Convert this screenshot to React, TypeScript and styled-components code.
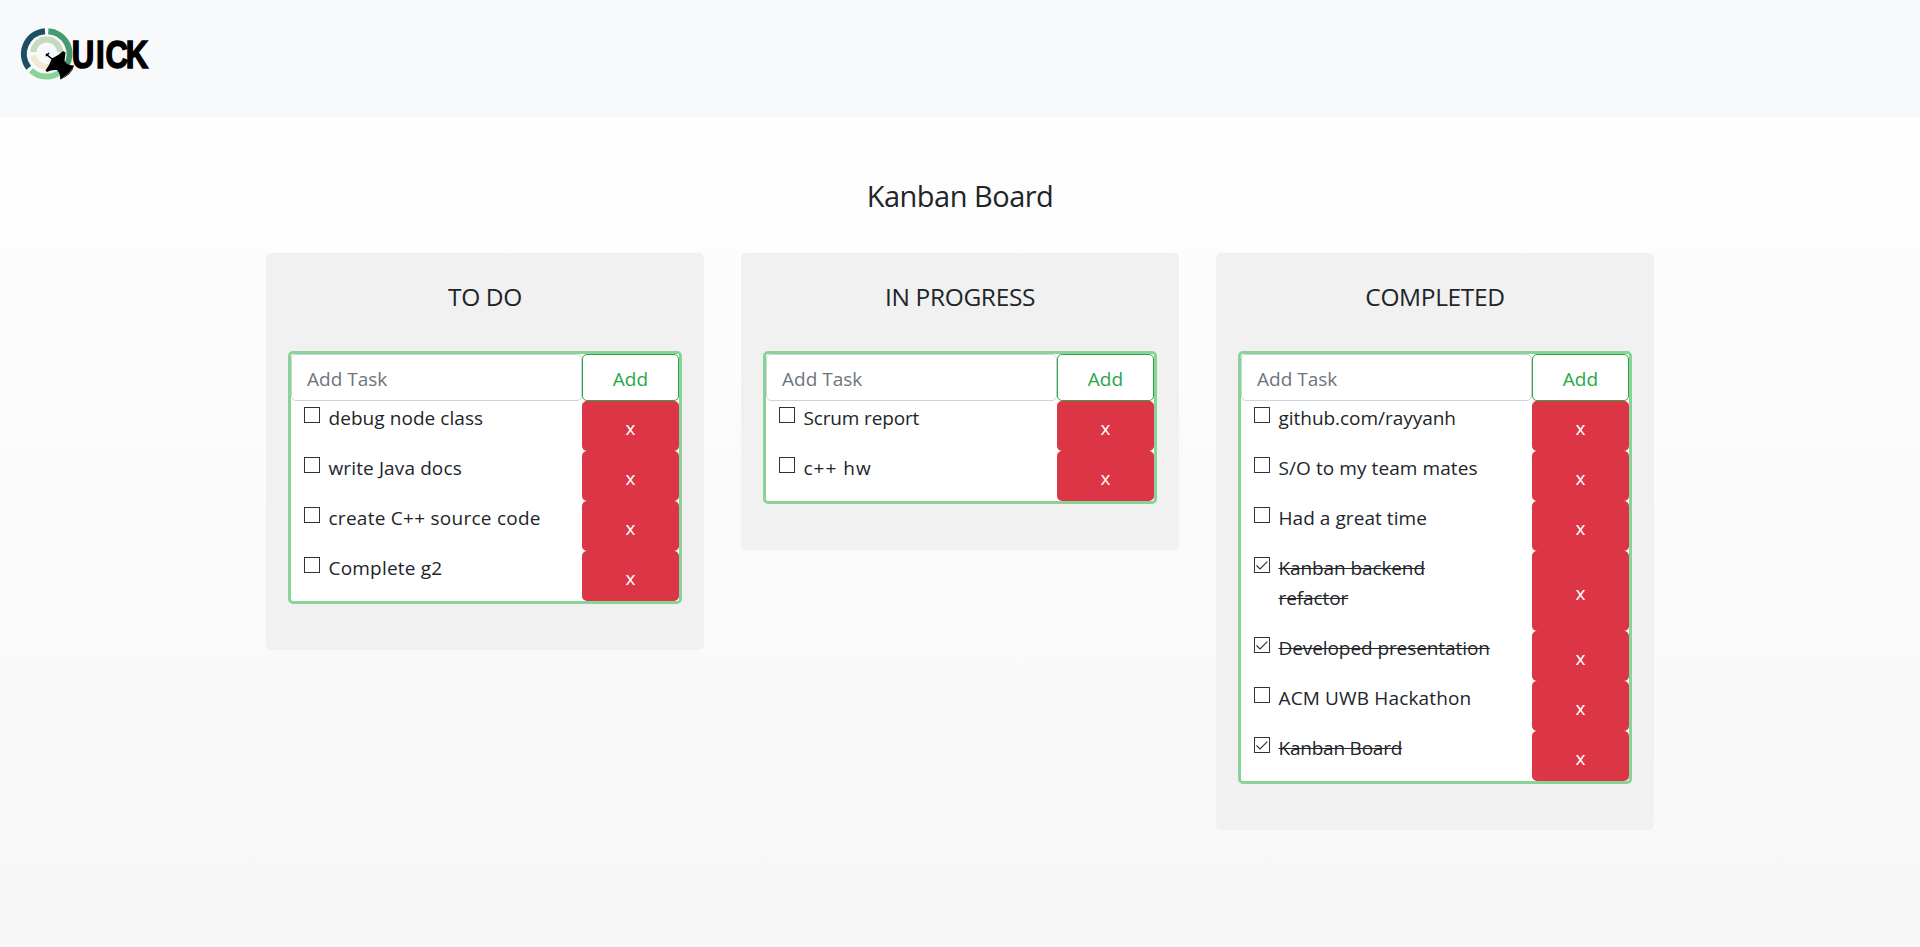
import React, { useState } from "react";
import styled, { createGlobalStyle } from "styled-components";

const GlobalStyle = createGlobalStyle`
  *, *::before, *::after { box-sizing: border-box; }
  body {
    margin: 0;
    min-height: 947px;
    font-family: "Open Sans", "Noto Sans", sans-serif;
    font-size: 19px;
    line-height: 30px;
    color: #212529;
    background: linear-gradient(#ffffff, #f7f7f7) no-repeat;
  }
`;

const Header = styled.header`
  height: 117px;
  padding: 20px 15px;
  background: #f8f9fb;
`;

const Logo = styled.svg`
  display: block;
  width: 140px;
  height: 65px;
  overflow: visible;
`;

const Main = styled.main`
  display: flex;
  flex-direction: column;
  align-items: center;
  padding-top: 60px;
`;

const PageTitle = styled.h1`
  margin: 0 0 38px;
  font-size: 29px;
  font-weight: 400;
  line-height: 38px;
  letter-spacing: -0.5px;
`;

const Board = styled.div`
  display: flex;
  align-items: flex-start;
  gap: 37px;
`;

const Column = styled.section`
  width: 438px;
  padding: 28px 22px 46px;
  border-radius: 5px;
  background: #f1f1f1;
`;

const ColumnTitle = styled.h2`
  margin: 0 0 38px;
  font-size: 24.5px;
  font-weight: 400;
  line-height: 32px;
  letter-spacing: -0.35px;
  text-align: center;
`;

const TaskBox = styled.div`
  border: 3px solid #88d498;
  border-radius: 5px;
  background: #fff;
`;

const AddRow = styled.form`
  display: flex;
  height: 47px;
`;

const TaskInput = styled.input`
  flex: 1;
  min-width: 0;
  padding: 2px 15px 0;
  border: 1px solid #ced4da;
  border-radius: 5px;
  background: #fff;
  color: #495057;
  font: inherit;
  outline: none;
  &::placeholder { color: #6c757d; opacity: 1; }
`;

const AddButton = styled.button`
  width: 97px;
  padding: 2px 0 0;
  border: 1px solid #28a745;
  border-radius: 5px;
  background: #fff;
  color: #28a745;
  font: inherit;
`;

const TaskRow = styled.div`
  display: flex;
  min-height: 50px;
`;

const TaskLabel = styled.label`
  display: flex;
  flex: 1;
  align-items: flex-start;
  gap: 8.5px;
  padding: 2px 30px 18px 13px;
`;

const CheckBox = styled.svg`
  flex: none;
  width: 16px;
  height: 16px;
  margin-top: 4px;
`;

const TaskText = styled.span<{ $done: boolean; $tracking: number }>`
  max-width: 216px;
  letter-spacing: ${(p) => p.$tracking}px;
  text-decoration: ${(p) => (p.$done ? "line-through" : "none")};
  text-decoration-thickness: 1px;
`;

const DeleteButton = styled.button`
  width: 97px;
  padding: 3px 0 0;
  border: 0;
  border-radius: 5px;
  background: #dc3545;
  color: #fff;
  font: inherit;
`;

type Task = { text: string; done?: boolean; tracking?: number };

const columns: { title: string; tasks: Task[] }[] = [
  {
    title: "TO DO",
    tasks: [
      { text: "debug node class", tracking: 0.06 },
      { text: "write Java docs", tracking: 0.12 },
      { text: "create C++ source code", tracking: 0.26 },
      { text: "Complete g2", tracking: 0.2 },
    ],
  },
  {
    title: "IN PROGRESS",
    tasks: [{ text: "Scrum report", tracking: -0.15 }, { text: "c++ hw", tracking: 1 }],
  },
  {
    title: "COMPLETED",
    tasks: [
      { text: "github.com/rayyanh", tracking: -0.04 },
      { text: "S/O to my team mates", tracking: 0.08 },
      { text: "Had a great time", tracking: 0.06 },
      { text: "Kanban backend refactor", done: true, tracking: -0.1 },
      { text: "Developed presentation", done: true, tracking: -0.08 },
      { text: "ACM UWB Hackathon", tracking: 0.15 },
      { text: "Kanban Board", done: true, tracking: -0.22 },
    ],
  },
];

function QuickLogo() {
  return (
    <Logo viewBox="15 20 140 65" aria-label="Quick">
      <g fill="none" strokeWidth="6">
        <path d="M45 31.2A22.7 22.7 0 0 0 28.7 67.8" stroke="#1d4e64" />
        <path d="M48.3 31.2A22.7 22.7 0 0 1 66 66" stroke="#469a72" />
        <path d="M31 70.3A22.7 22.7 0 0 0 61 71.5" stroke="#88d498" />
        <path d="M33.2 52A13.6 13.6 0 0 1 60.3 52" stroke="#c6dabf" />
        <path d="M33.2 55.3A13.6 13.6 0 0 0 50 66.5" stroke="#f3e9d2" />
      </g>
      <path d="M46 54L55 61.5M46 56L49 53" stroke="#000" strokeWidth="1.6" />
      <path d="M52 58.5Q59 55 63 51L65.5 52.5L64.5 61Q67 65.5 74 65.5Q72 75 60 79.5Q61 74 57 70Q51 69.5 47 72L45.5 70.5Q49 66 52 58.5Z" fill="#000" />
      <path d="M72.5 68.5Q69 75 62.5 78" fill="none" stroke="#666" />
      <text
        transform="translate(72 67.7) scale(0.8 1)"
        x="-0.2 30 42 67.3"
        y="0"
        fontFamily="Liberation Sans, sans-serif"
        fontWeight="700"
        fontSize="39"
        stroke="#000"
        strokeWidth="1.5"
      >
        UICK
      </text>
    </Logo>
  );
}

function TaskItem({ task }: { task: Task }) {
  const [done, setDone] = useState(!!task.done);
  return (
    <TaskRow>
      <TaskLabel onClick={() => setDone(!done)}>
        <CheckBox viewBox="0 0 16 16" fill="none">
          <rect x="0.5" y="0.5" width="15" height="15" fill="#fff" stroke="#333" />
          {done && <path d="M2.5 8.5L6 12L13.3 4.7" stroke="#333" strokeWidth="1.2" />}
        </CheckBox>
        <TaskText $done={done} $tracking={task.tracking ?? 0}>{task.text}</TaskText>
      </TaskLabel>
      <DeleteButton>x</DeleteButton>
    </TaskRow>
  );
}

export default function App() {
  return (
    <>
      <GlobalStyle />
      <Header><QuickLogo /></Header>
      <Main>
        <PageTitle>Kanban Board</PageTitle>
        <Board>
          {columns.map((c) => (
            <Column key={c.title}>
              <ColumnTitle>{c.title}</ColumnTitle>
              <TaskBox>
                <AddRow onSubmit={(e) => e.preventDefault()}>
                  <TaskInput placeholder="Add Task" />
                  <AddButton>Add</AddButton>
                </AddRow>
                {c.tasks.map((t) => <TaskItem key={t.text} task={t} />)}
              </TaskBox>
            </Column>
          ))}
        </Board>
      </Main>
    </>
  );
}
